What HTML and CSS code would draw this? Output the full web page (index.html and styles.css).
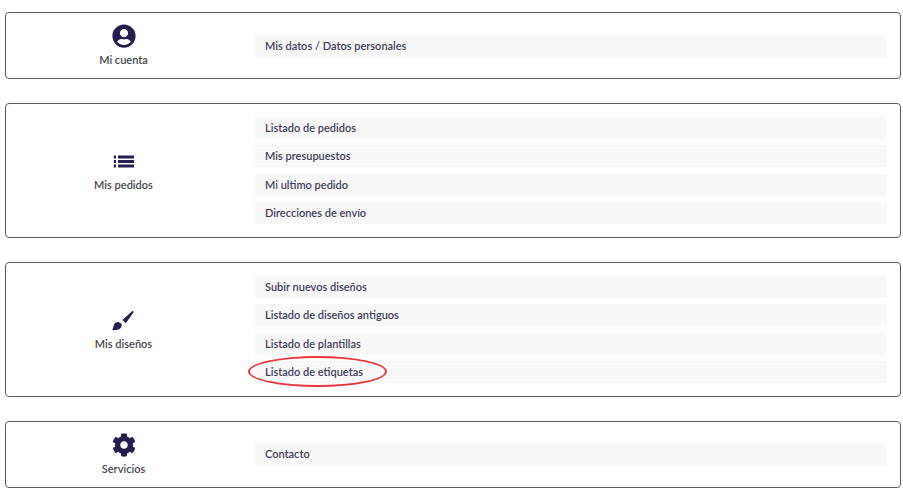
FILE: index.html
```html
<!DOCTYPE html>
<html lang="es">
<head>
  <meta charset="UTF-8">
  <title>Mi cuenta</title>
  <link rel="stylesheet" href="styles.css">
</head>
<body>

<div class="menu">

  <div class="card">
    <div class="side">
      <svg class="icon" viewBox="0 0 496 512"><path d="M248 8C111 8 0 119 0 256s111 248 248 248 248-111 248-248S385 8 248 8zm0 96c48.6 0 88 39.4 88 88s-39.4 88-88 88-88-39.4-88-88 39.4-88 88-88zm0 344c-58.7 0-111.3-26.6-146.5-68.2 18.8-35.4 55.6-59.8 98.5-59.8 2.4 0 4.8.4 7.1 1.1 13 4.2 26.6 6.9 40.9 6.9 14.3 0 28-2.7 40.9-6.9 2.3-.7 4.7-1.1 7.1-1.1 42.9 0 79.7 24.4 98.5 59.8C359.3 421.4 306.7 448 248 448z"/></svg>
      <span class="label">Mi cuenta</span>
    </div>
    <ul class="links">
      <li>Mis datos / Datos personales</li>
    </ul>
  </div>

  <div class="card">
    <div class="side">
      <svg class="icon" viewBox="0 0 24 24"><path d="M1.8 6.6h2.2v2.8h-2.2zM1.8 11.1h2.2v2.8h-2.2zM1.8 15.6h2.2v2.8h-2.2zM6 6.6h16v2.8h-16zM6 11.1h16v2.8h-16zM6 15.6h16v2.8h-16z"/></svg>
      <span class="label">Mis pedidos</span>
    </div>
    <ul class="links">
      <li>Listado de pedidos</li>
      <li>Mis presupuestos</li>
      <li>Mi ultimo pedido</li>
      <li>Direcciones de envío</li>
    </ul>
  </div>

  <div class="card">
    <div class="side">
      <svg class="icon" viewBox="0 0 24 24"><path d="M20 3.2c.9-.8 2.1.4 1.4 1.4l-7.6 10.6-3.4-3.2zM6.5 14c-2.6 0-4.6 1.6-5 4.2-.2 1.6-.6 2.6-1.5 3.6 3 .6 7 .2 8.6-1.8 1.4-1.7 1.4-3.6.4-4.8z"/></svg>
      <span class="label">Mis diseños</span>
    </div>
    <ul class="links">
      <li>Subir nuevos diseños</li>
      <li>Listado de diseños antiguos</li>
      <li>Listado de plantillas</li>
      <li class="marked">Listado de etiquetas</li>
    </ul>
  </div>

  <div class="card">
    <div class="side">
      <svg class="icon" viewBox="0 0 512 512"><path d="M487.4 315.7l-42.6-24.6c4.3-23.2 4.3-47 0-70.2l42.6-24.6c4.9-2.8 7.1-8.6 5.5-14-11.1-35.6-30-67.8-54.7-94.6-3.8-4.1-10-5.1-14.8-2.3L380.8 110c-17.9-15.4-38.5-27.3-60.8-35.1V25.8c0-5.6-3.9-10.5-9.4-11.7-36.7-8.2-74.3-7.8-109.2 0-5.5 1.2-9.4 6.1-9.4 11.7V75c-22.2 7.9-42.8 19.8-60.8 35.1L88.7 85.5c-4.9-2.8-11-1.9-14.8 2.3-24.7 26.7-43.6 58.9-54.7 94.6-1.7 5.4.6 11.2 5.5 14L67.3 221c-4.3 23.2-4.3 47 0 70.2l-42.6 24.6c-4.9 2.8-7.1 8.6-5.5 14 11.1 35.6 30 67.8 54.7 94.6 3.8 4.1 10 5.1 14.8 2.3l42.6-24.6c17.9 15.4 38.5 27.3 60.8 35.1v49.2c0 5.6 3.9 10.5 9.4 11.7 36.7 8.2 74.3 7.8 109.2 0 5.5-1.2 9.4-6.1 9.4-11.7v-49.2c22.2-7.9 42.8-19.8 60.8-35.1l42.6 24.6c4.9 2.8 11 1.9 14.8-2.3 24.7-26.7 43.6-58.9 54.7-94.6 1.5-5.5-.7-11.3-5.6-14.1zM256 336c-44.1 0-80-35.9-80-80s35.9-80 80-80 80 35.9 80 80-35.9 80-80 80z"/></svg>
      <span class="label">Servicios</span>
    </div>
    <ul class="links">
      <li>Contacto</li>
    </ul>
  </div>

</div>

</body>
</html>
```

FILE: styles.css
```css
* {
  margin: 0;
  padding: 0;
  list-style: none;
  box-sizing: border-box;
}

body {
  background-color: #fff;
  font-family: "Lato", "Liberation Sans", sans-serif;
}

.menu {
  width: 896px;
  margin: 12px 0 0 5px;
  display: flex;
  flex-direction: column;
  gap: 24px;
}

.card {
  border: 1px solid #5b5a6c;
  border-radius: 4px;
  padding: 11px 13px 11px 0;
  display: flex;
  align-items: center;
}

.side {
  width: 249px;
  padding-right: 14px;
  display: flex;
  flex-direction: column;
  align-items: center;
  gap: 5px;
}

.icon {
  width: 24px;
  height: 24px;
  fill: #231f4e;
}

.label {
  font-size: 11px;
  font-weight: 600;
  line-height: 14px;
  color: #47474e;
}

.links {
  flex: 1;
  padding: 2px 0;
  display: flex;
  flex-direction: column;
  gap: 6.33px;
}

.links li {
  height: 22px;
  line-height: 21px;
  padding-left: 10px;
  background-color: #f8f8f8;
  font-size: 11px;
  font-weight: 600;
  color: #403d5e;
  position: relative;
}

/* red ring drawn over the row */
.marked::after {
  content: "";
  box-sizing: border-box;
  position: absolute;
  left: -7px;
  top: -5px;
  width: 139px;
  height: 31px;
  border: 2px solid #e8363c;
  border-radius: 50%;
}
```
